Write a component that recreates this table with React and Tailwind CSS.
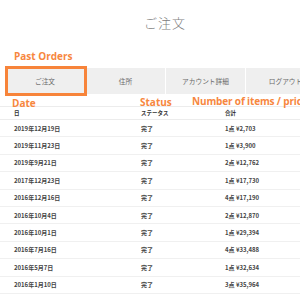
import React from 'react';

const orders = [
    { date: '2019年12月19日', total: '1点 ¥2,703' },
    { date: '2019年11月23日', total: '1点 ¥3,900' },
    { date: '2019年9月21日', total: '2点 ¥12,762' },
    { date: '2017年12月23日', total: '1点 ¥17,730' },
    { date: '2016年12月16日', total: '4点 ¥17,190' },
    { date: '2016年10月4日', total: '2点 ¥12,870' },
    { date: '2016年10月1日', total: '1点 ¥29,394' },
    { date: '2016年7月16日', total: '4点 ¥33,488' },
    { date: '2016年5月7日', total: '1点 ¥32,634' },
    { date: '2016年1月10日', total: '3点 ¥35,964' },
];

const tabs = ['ご注文', '住所', 'アカウント詳細', 'ログアウト'];

const jp = { fontFamily: '"Noto Sans CJK JP", "Noto Sans", sans-serif' };
const latin = { fontFamily: '"Open Sans", sans-serif' };

const App = () => {
    return (
        <div className="relative w-[300px] h-[300px] overflow-hidden bg-white" style={jp}>
            <h1 className="pt-[14px] pl-[30px] text-center text-[13px] leading-[18px] font-light text-[#808080] tracking-[1px]">
                ご注文
            </h1>

            <div className="mt-[18px] pl-[14px] text-[10px] leading-[12px] font-bold text-[#f7873e]" style={latin}>
                Past Orders
            </div>

            {/* tab bar */}
            <div className="relative mt-[6px] ml-[5px] flex h-[26px] bg-[#efefef]">
                {tabs.map((t, i) => (
                    <div key={t} className={`flex w-[80px] shrink-0 items-center justify-center whitespace-nowrap text-[6.7px] text-[#6a6a6a] ${i > 0 ? 'border-l border-white' : ''}`}>
                        {t}
                    </div>
                ))}
                <div className="absolute left-0 top-[-2px] h-[30px] w-[82px] border-[3px] border-[#f7843a]" />
            </div>

            {/* annotations */}
            <div className="flex h-[12px] pl-[12px] text-[10px] leading-[12px] font-bold text-[#f7873e] whitespace-nowrap" style={latin}>
                <span className="w-[128px] shrink-0 pt-[3px]">Date</span>
                <span className="w-[52px] shrink-0 pt-[2px]">Status</span>
                <span className="shrink-0 pt-[1px] tracking-[-0.15px]">Number of items / price</span>
            </div>

            {/* table */}
            <div className="border-t border-[#ececec]">
                <div className="flex h-[13px] items-center border-b border-[#ececec] pl-[14px] text-[5.5px] font-bold text-[#333]">
                    <span className="w-[127px] shrink-0">日</span>
                    <span className="w-[84px] shrink-0">ステータス</span>
                    <span>合計</span>
                </div>
                {orders.map((o) => (
                    <div key={o.date} className="flex h-[17.4px] items-center border-b border-[#f0f0f0] pl-[14px] text-[6px] font-bold text-[#444]">
                        <span className="w-[127px] shrink-0">{o.date}</span>
                        <span className="w-[84px] shrink-0">完了</span>
                        <span>{o.total}</span>
                    </div>
                ))}
            </div>
        </div>
    );
};

export default App;
